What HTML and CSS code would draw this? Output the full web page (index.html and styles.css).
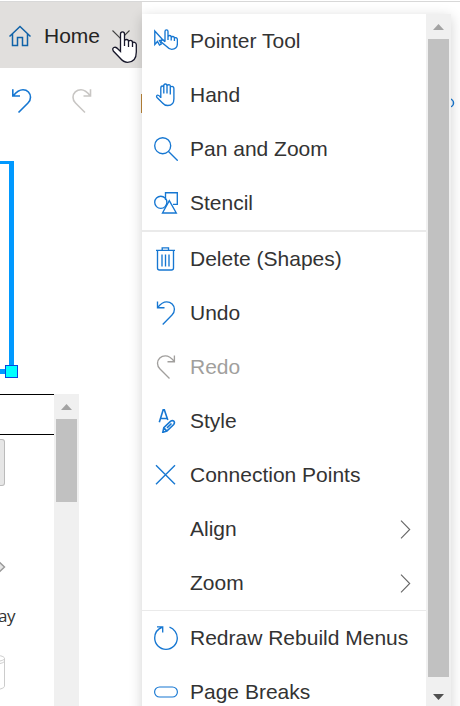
FILE: index.html
```html
<!DOCTYPE html>
<html lang="en">
<head>
<meta charset="utf-8">
<title>Home</title>
<link rel="stylesheet" href="styles.css">
</head>
<body>
<header class="topbar">
  <div class="tab">
    <svg class="home" width="24" height="24" viewBox="0 0 24 24"><path d="M1.500 12.500 12 2.500 22.500 12.500M4.500 10V21.500H9.500V13.500H14.500V21.500H19.500V10"/></svg>
    <span>Home</span>
    <svg class="chev" width="18" height="10" viewBox="0 0 18 10"><path d="M.5 .5 9 9 17.500 .5"/></svg>
  </div>
</header>
<div class="toolbar">
  <svg class="blue" width="24" height="27" viewBox="0 0 24 27"><path d="M2.800 1.200V8H10M3.300 7.700C7 3 10 1.700 13 1.700C17.500 1.700 20.500 5.200 20.500 9.200C20.500 11.500 19.500 13.500 18 15L8.500 24.500"/></svg>
  <svg class="pale" width="24" height="27" viewBox="0 0 24 27"><path d="M20.500 1.200V8H13.500M20.200 7.700C16.500 3 14 1.700 11 1.700C6.500 1.700 3 5.200 3 9.200C3 11.500 4 13.500 5.500 15L15 24.500"/></svg>
  <i class="accent"></i>
</div>
<main class="workspace">
  <div class="selection"><i class="handle"></i></div>
  <section class="stencils">
    <div class="shapes">
      <div class="shapes-head"></div>
      <div class="stub"></div>
      <svg class="diamond" width="8" height="16" viewBox="0 0 8 16"><path d="M-3 1 4.500 8-3 15-10 8Z"/></svg>
      <span class="label">ay</span>
      <svg class="cylinder" width="8" height="38" viewBox="0 0 8 38"><path d="M-8 1C-2 1 4.500 2 4.500 4.500V32C4.500 34 1 35 -4 36M4.500 4.500C4.500 6 1 7 -3 7.500M4.500 7C4.500 8.500 1 9.500-3 10"/></svg>
    </div>
    <div class="scroll">
      <svg width="11" height="6"><path d="M0 6 5.500 0 11 6Z" fill="#a3a3a3"/></svg>
      <i class="thumb"></i>
    </div>
  </section>
</main>
<svg class="edge" width="10" height="12" viewBox="0 0 10 12"><circle cx="2.500" cy="6" r="4"/></svg>

<nav class="menu">
  <div class="items">
    <div class="item"><svg viewBox="0 0 24 24"><path d="M.8 2V15.500L3.500 12.500 5.500 16 7.300 15 5.500 11.500 9 11Z"/><path class="fill" d="M11 12.500V2.500Q11 .8 12.500 .8T14 2.500V8Q14 6.500 15.600 6.500T17.200 8V8.500Q17.500 7.300 19 7.500T20.400 9V9.500Q20.800 8.300 22 8.700T23.400 10.500V14.500Q23.400 20.300 17.700 20.300Q15.200 20.300 13 17.800L7.500 13.300Q6.500 12 8 11.200T11 13M14 8V11M17.200 8.500V11.500M20.400 9.500V12"/></svg>Pointer Tool</div>
    <div class="item"><svg viewBox="0 0 24 24"><path d="M6.800 15V5.500Q6.800 3 8.300 3T9.800 4.500V3Q9.800 1 11.400 1T13 3V3Q13 1.700 14.700 1.700T16.300 3.500V4.500Q16.300 3.300 18 3.300T19.900 5.500V16Q19.900 22.500 13.800 22.500Q10.500 22.500 8.500 20L3 14.500Q2 13.200 3.200 12.300T6.800 14.500M9.800 4.500V10.500M13 3V10.500M16.300 4.500V11.500"/></svg>Hand</div>
    <div class="item"><svg viewBox="0 0 24 24"><circle cx="8.700" cy="8.700" r="8"/><path d="M14.300 14.300 23.700 23.700"/></svg>Pan and Zoom</div>
    <div class="item"><svg viewBox="0 0 24 24"><path d="M11.500 9V1.700H23.300V13.300H19"/><circle cx="6.800" cy="11.300" r="6.100"/><path class="fill" d="M15.300 9.700 22.300 22H8.500Z"/></svg>Stencil</div>
    <hr class="thick">
    <div class="item"><svg viewBox="0 0 24 24"><path d="M2 3.300H21M8.200 3V.8H14.500V3M3.500 3.500V21Q3.500 23 5.500 23H17.500Q19.500 23 19.500 21V3.500M8 7.500V19.500M11.500 7.500V19.500M15 7.500V19.500"/></svg>Delete (Shapes)</div>
    <div class="item"><svg viewBox="0 0 24 24"><path d="M3.500 .5V6.700H10.500M3.800 6.400C7 2.200 9.500 .8 12.700 .8C17 .8 20.400 4.300 20.400 8.300C20.400 10.800 19.500 12.600 18 14.100L8.700 23.400"/></svg>Undo</div>
    <div class="item disabled"><svg viewBox="0 0 24 24"><path d="M20.400 .5V6.700H13.500M20.200 6.400C17 2.200 14.500 .8 11.300 .8C7 .8 3.500 4.300 3.500 8.300C3.500 10.800 4.500 12.600 6 14.100L15.500 23.400"/></svg>Redo</div>
    <div class="item"><svg class="bold" viewBox="0 0 24 24"><path d="M5.300 13.300 9.200 .7H10.300L13.800 11M6.500 9.500H13M8.800 23.300 9.800 18.700 16.700 12.200Q18.500 11 19.800 12.200T19.700 15.500L12.900 22.100ZM9.800 18.700 12.900 22.100M13 18.800 17.500 14.500"/></svg>Style</div>
    <div class="item"><svg viewBox="0 0 24 24"><path d="M2 2.200 21 21.200M21 2.200 2 21.200"/></svg>Connection Points</div>
    <div class="item sub"><span>Align</span><svg class="arrow" viewBox="0 0 11 19"><path d="M1 .7 9.700 9.500 1 18.300"/></svg></div>
    <div class="item sub"><span>Zoom</span><svg class="arrow" viewBox="0 0 11 19"><path d="M1 .7 9.700 9.500 1 18.300"/></svg></div>
    <hr>
    <div class="item"><svg viewBox="0 0 24 24"><path d="M3 .8H8.700V6.500M8.600 1C3.500 3 .7 7.500 .7 12A11.300 11.300 0 0 0 23.300 12C23.300 7 20 2.700 15.500 1.200"/></svg>Redraw Rebuild Menus</div>
    <div class="item"><svg class="thin" viewBox="0 0 24 24"><rect x=".6" y="7" width="22.800" height="10" rx="5"/></svg>Page Breaks</div>
  </div>
  <div class="scroll">
    <svg width="11" height="6"><path d="M0 6 5.500 0 11 6Z" fill="#a3a3a3"/></svg>
    <i class="thumb"></i>
    <svg class="down" width="11" height="6"><path d="M0 0 5.500 6 11 0Z" fill="#505050"/></svg>
  </div>
</nav>
<svg class="cursor" width="28" height="34" viewBox="0 0 28 34"><path d="M8.500 18V3Q8.500 .8 10.500 .8T12.500 3V10Q12.500 8.500 14.500 8.500T16.500 10.500V11Q16.500 9.300 18.500 9.300T20.500 11.500V12.500Q20.800 10.800 22.500 11.300T24.300 13.500V21Q24.300 31.300 15.500 31.300Q11.500 31.300 8 27L1.300 20Q0 17.500 1.800 16.500Q4 15.500 6 18L8.500 20.500ZM12.500 10V15M16.500 11V16M20.500 12.500V16"/></svg>
</body>
</html>
```
FILE: styles.css
```css
* { box-sizing: border-box; }
body {
  margin: 0;
  width: 460px;
  height: 706px;
  overflow: hidden;
  position: relative;
  background: #fff;
  font: 21px "Liberation Sans", Arial, sans-serif;
  color: #333;
}
svg { fill: none; stroke: none; display: block; flex: none; }
.topbar { height: 68px; padding-top: 1px; }
.topbar::before { content: ""; display: block; height: 1px; background: #d8d8d8; }
.tab {
  display: flex;
  align-items: center;
  width: 142px;
  height: 66px;
  padding: 2px 0 0 8px;
  background: #e1dfdd;
  color: #252423;
}
.tab span { width: 68px; margin-left: 12px; }
.home { stroke: #0f62a8; stroke-width: 1.5; }
.chev { stroke: #444; stroke-width: 1.1; margin-bottom: 2px; }
.toolbar { display: flex; align-items: flex-start; height: 93px; padding: 20px 0 0 10px; }
.blue { stroke: #1677d2; stroke-width: 1.6; }
.pale { stroke: #c8c6c4; stroke-width: 1.6; margin-left: 36px; }
.accent { width: 1px; height: 19px; margin: 6px 0 0 47px; background: #bd8739; }
.selection {
  position: relative;
  width: 14px;
  height: 213px;
  border: solid #0099ff;
  border-width: 3px 5px 5px 0;
}
.handle {
  position: absolute;
  right: -9px;
  bottom: -9px;
  width: 13px;
  height: 13px;
  border: 1px solid #0648df;
  background: #00ffff;
}
.stencils { display: flex; height: 312px; margin-top: 20px; }
.shapes { width: 54px; overflow: hidden; }
.shapes-head { height: 41px; border: solid #000; border-width: 1px 0; }
.stub {
  width: 5px;
  height: 47px;
  margin: 4px 0 73px;
  border: 1px solid #bbb;
  border-left: 0;
  border-radius: 0 3px 3px 0;
  background: #e6e6e6;
}
.diamond path { fill: #e6e6e6; stroke: #999; stroke-width: 1.4; }
.label {
  display: block;
  margin: 29px 0 0 -2px;
  font: 17px/24px "Open Sans", sans-serif;
  letter-spacing: -.5px;
}
.cylinder { margin-top: 26px; stroke: #ccc; }
.scroll {
  display: flex;
  flex-direction: column;
  align-items: center;
  width: 25px;
  padding-top: 10px;
  background: #f0f0f0;
}
.thumb { width: 21px; height: 83px; margin-top: 9px; background: #c1c1c1; }
.menu {
  position: absolute;
  left: 142px;
  top: 14px;
  display: flex;
  width: 309px;
  height: 720px;
  background: #fff;
  box-shadow: 0 3px 12px rgba(0, 0, 0, .18);
}
.items { width: 284px; }
.menu .thumb { height: 638px; }
.down { margin-top: 17px; }
.item {
  display: flex;
  align-items: center;
  height: 54px;
  padding-left: 12px;
  gap: 12px;
}
.item svg { width: 24px; height: 24px; stroke: #1677d2; stroke-width: 1.35; }
.item .bold { stroke-width: 1.6; }
.item .thin { stroke-width: 1.15; }
.item .fill { fill: #fff; }
.item.disabled { color: #a19f9d; }
.item.disabled svg { stroke: #a19f9d; }
.item.sub { padding: 0 15px 0 48px; justify-content: space-between; }
.item .arrow { width: 11px; height: 19px; stroke: #666; stroke-width: 1.1; }
hr { height: 1px; margin: 0; border: 0; background: #eaeaea; }
.thick { height: 2px; }
.edge { position: absolute; left: 447px; top: 97px; stroke: #1677d2; stroke-width: 1.5; }
.cursor {
  position: absolute;
  left: 112px;
  top: 31px;
  fill: #fff;
  stroke: #17172a;
  stroke-width: 1.3;
}
```
